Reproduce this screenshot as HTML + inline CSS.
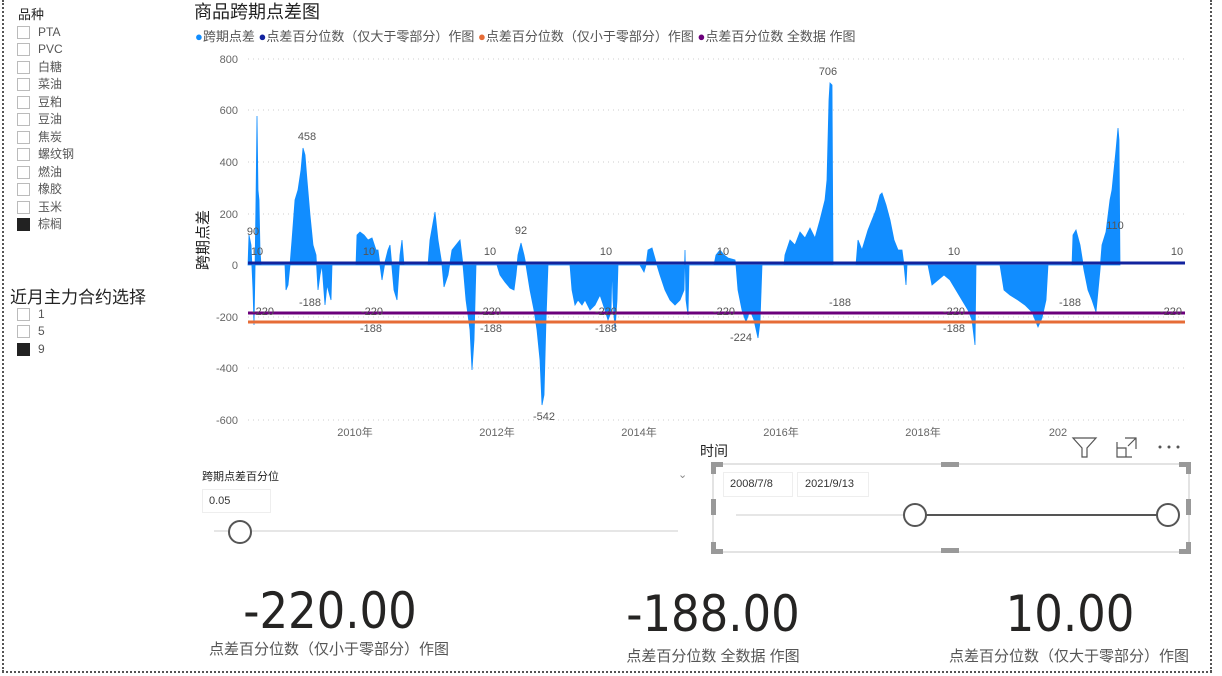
<!DOCTYPE html>
<html><head><meta charset="utf-8"><style>
body{margin:0;width:1222px;height:676px;background:#fff;position:relative;overflow:hidden;font-family:"Liberation Sans","Noto Sans CJK SC",sans-serif;color:#333}
.a{position:absolute;white-space:nowrap}
.cb{position:absolute;left:17px;width:11px;height:11px;border:1px solid #bbb;background:#fff}
.cb.on{background:#222;border-color:#222}
.it{position:absolute;left:38px;font-size:12px;line-height:14px;color:#555}
.big{position:absolute;font-family:"DejaVu Sans Condensed","Liberation Sans Narrow",sans-serif;font-size:50px;color:#252423;text-align:center}
.lab{position:absolute;font-size:15px;color:#555;text-align:center}
</style></head><body>
<div class="a" style="left:2px;top:0;width:0;height:672px;border-left:2px dotted #555"></div>
<div class="a" style="left:1210px;top:0;width:0;height:672px;border-left:2px dotted #555"></div>
<div class="a" style="left:2px;top:671px;width:1210px;height:0;border-top:2px dotted #555"></div>

<div class="a" style="left:18px;top:4px;font-size:13px;color:#222">品种</div>
<div class="cb" style="top:26px"></div><div class="it" style="top:25px">PTA</div>
<div class="cb" style="top:43px"></div><div class="it" style="top:42px">PVC</div>
<div class="cb" style="top:61px"></div><div class="it" style="top:60px">白糖</div>
<div class="cb" style="top:78px"></div><div class="it" style="top:77px">菜油</div>
<div class="cb" style="top:96px"></div><div class="it" style="top:95px">豆粕</div>
<div class="cb" style="top:113px"></div><div class="it" style="top:112px">豆油</div>
<div class="cb" style="top:131px"></div><div class="it" style="top:130px">焦炭</div>
<div class="cb" style="top:148px"></div><div class="it" style="top:147px">螺纹钢</div>
<div class="cb" style="top:166px"></div><div class="it" style="top:165px">燃油</div>
<div class="cb" style="top:183px"></div><div class="it" style="top:182px">橡胶</div>
<div class="cb" style="top:201px"></div><div class="it" style="top:200px">玉米</div>
<div class="cb on" style="top:218px"></div><div class="it" style="top:217px">棕榈</div>
<div class="a" style="left:10px;top:283px;font-size:17px;color:#222">近月主力合约选择</div>
<div class="cb" style="top:308px"></div><div class="it" style="top:307px">1</div>
<div class="cb" style="top:325px"></div><div class="it" style="top:324px">5</div>
<div class="cb on" style="top:343px"></div><div class="it" style="top:342px">9</div>

<div class="a" style="left:194px;top:-2px;font-size:18px;color:#222">商品跨期点差图</div>
<div class="a" style="left:195px;top:26px;font-size:13px;color:#555">
<span style="color:#118dff">●</span>跨期点差 <span style="color:#12239e">●</span>点差百分位数（仅大于零部分）作图 <span style="color:#e66c37">●</span>点差百分位数（仅小于零部分）作图 <span style="color:#6b007b">●</span>点差百分位数 全数据 作图</div>
<div class="a" style="left:192px;top:270px;font-size:15px;color:#222;transform:rotate(-90deg);transform-origin:0 0">跨期点差</div>

<svg class="a" style="left:0;top:0" width="1222" height="440">
<g stroke="#ccc" stroke-dasharray="1,4" stroke-width="1">
<line x1="248" y1="59" x2="1185" y2="59"/><line x1="248" y1="110" x2="1185" y2="110"/><line x1="248" y1="162" x2="1185" y2="162"/><line x1="248" y1="214" x2="1185" y2="214"/><line x1="248" y1="317" x2="1185" y2="317"/><line x1="248" y1="368" x2="1185" y2="368"/><line x1="248" y1="420" x2="1185" y2="420"/></g>
<g font-family="Liberation Sans,sans-serif" font-size="11" fill="#666" text-anchor="end">
<text x="238" y="63">800</text><text x="238" y="114">600</text><text x="238" y="166">400</text><text x="238" y="218">200</text><text x="238" y="269">0</text><text x="238" y="321">-200</text><text x="238" y="372">-400</text><text x="238" y="424">-600</text></g>
<g font-family="Liberation Sans,Noto Sans CJK SC,sans-serif" font-size="11" fill="#666" text-anchor="middle">
<text x="355" y="436">2010年</text><text x="497" y="436">2012年</text><text x="639" y="436">2014年</text><text x="781" y="436">2016年</text><text x="923" y="436">2018年</text><text x="1058" y="436">202</text></g>
<path fill="#118dff" stroke="#118dff" stroke-width="0.8" d="M248 265 L249 235 251 245 253 290 254 325 255 270 256 200 257 116 258 190 259 200 260 250 261 265 285 265 286 290 288 285 290 265 292 240 295 200 298 190 301 170 303 148 305 155 307 180 310 215 313 245 316 255 318 290 320 275 322 265 325 305 327 285 331 300 332 265 356 265 357 235 360 232 364 235 368 240 372 238 376 250 378 250 380 265 382 280 385 262 388 250 390 245 394 290 397 300 400 255 402 240 404 265 428 265 430 240 435 212 438 240 442 265 444 287 448 275 452 250 456 245 460 240 463 265 466 300 470 330 472 370 474 340 476 265 497 265 500 275 505 282 510 288 514 290 516 275 518 255 521 243 524 255 526 265 530 290 534 310 537 330 540 360 542 405 544 395 546 320 548 265 570 265 572 290 575 305 578 300 582 305 585 300 590 310 595 305 600 295 605 310 608 320 611 312 612 265 613 300 615 330 617 300 618 265 640 265 644 272 646 265 648 250 652 248 656 262 660 275 665 290 670 300 675 305 680 300 684 290 685 250 686 300 688 315 689 265 714 265 716 255 720 250 724 255 728 258 735 260 736 265 738 290 742 310 746 322 750 310 754 320 758 338 760 322 762 265 784 265 785 255 790 240 795 245 800 232 805 238 810 228 815 238 820 220 825 200 827 180 829 100 830 83 832 85 833 265 856 265 858 240 862 250 868 230 872 220 876 210 880 195 882 193 886 205 890 220 894 240 898 250 902 250 904 265 906 285 907 265 928 265 932 285 938 280 944 275 950 280 956 290 962 300 968 310 972 320 975 345 976 265 1000 265 1004 290 1010 295 1018 300 1025 305 1032 312 1038 327 1042 318 1046 300 1048 265 1072 265 1073 235 1076 230 1080 245 1084 270 1088 290 1092 300 1096 312 1100 270 1102 245 1106 232 1110 200 1112 190 1114 170 1116 150 1118 128 1119 140 1120 265 Z"/>
<line x1="248" y1="263" x2="1185" y2="263" stroke="#12239e" stroke-width="3"/>
<line x1="248" y1="313" x2="1185" y2="313" stroke="#6b007b" stroke-width="3"/>
<line x1="248" y1="322" x2="1185" y2="322" stroke="#e66c37" stroke-width="3"/>
<g font-family="Liberation Sans,sans-serif" font-size="11" fill="#555" text-anchor="middle">
<text x="253" y="235">90</text><text x="257" y="255">10</text><text x="307" y="140">458</text><text x="310" y="306">-188</text><text x="263" y="315">-220</text>
<text x="369" y="255">10</text><text x="372" y="315">-220</text><text x="371" y="332">-188</text>
<text x="490" y="255">10</text><text x="521" y="234">92</text><text x="490" y="315">-220</text><text x="491" y="332">-188</text>
<text x="606" y="255">10</text><text x="606" y="315">-220</text><text x="606" y="332">-188</text><text x="544" y="420">-542</text>
<text x="723" y="255">10</text><text x="724" y="315">-220</text><text x="741" y="341">-224</text>
<text x="828" y="75">706</text><text x="840" y="306">-188</text>
<text x="954" y="255">10</text><text x="954" y="315">-220</text><text x="954" y="332">-188</text>
<text x="1070" y="306">-188</text><text x="1115" y="229">110</text><text x="1177" y="255">10</text><text x="1171" y="315">-220</text></g>
</svg>

<div class="a" style="left:202px;top:468px;font-size:11px;color:#222">跨期点差百分位</div>
<div class="a" style="left:678px;top:468px;font-size:11px;color:#888">⌄</div>
<div class="a" style="left:202px;top:489px;width:67px;height:22px;border:1px solid #eee;font-size:11px;line-height:22px;text-indent:6px">0.05</div>
<div class="a" style="left:214px;top:530px;width:464px;height:2px;background:#e6e6e6"></div>
<div class="a" style="left:228px;top:520px;width:20px;height:20px;border:2px solid #555;border-radius:50%;background:#fff"></div>

<div class="a" style="left:700px;top:441px;font-size:14px;color:#222">时间</div>
<svg class="a" style="left:1070px;top:434px" width="120" height="26">
<path d="M3 4 H26 L17 14 V23 H12 V14 Z" fill="none" stroke="#555" stroke-width="1.2"/>
<path d="M47 8 V23 H62 M47 14 H56 V23 M55 4 H66 V15 M66 4 L58 12" fill="none" stroke="#555" stroke-width="1.2"/>
<circle cx="90" cy="13" r="1.5" fill="#555"/><circle cx="99" cy="13" r="1.5" fill="#555"/><circle cx="108" cy="13" r="1.5" fill="#555"/>
</svg>
<div class="a" style="left:712px;top:463px;width:474px;height:86px;border:2px solid #e3e3e3"></div>
<svg class="a" style="left:708px;top:459px" width="486" height="98" fill="#999">
<path d="M3 3 H15 V8 H8 V15 H3 Z"/><path d="M483 3 H471 V8 H478 V15 H483 Z"/><path d="M3 95 H15 V90 H8 V83 H3 Z"/><path d="M483 95 H471 V90 H478 V83 H483 Z"/>
<rect x="233" y="3" width="18" height="5"/><rect x="233" y="89" width="18" height="5"/><rect x="3" y="40" width="5" height="16"/><rect x="478" y="40" width="5" height="16"/>
</svg>
<div class="a" style="left:723px;top:472px;width:68px;height:23px;border:1px solid #eee;font-size:11px;line-height:23px;text-indent:6px">2008/7/8</div>
<div class="a" style="left:797px;top:472px;width:70px;height:23px;border:1px solid #eee;font-size:11px;line-height:23px;text-indent:7px">2021/9/13</div>
<div class="a" style="left:736px;top:514px;width:180px;height:2px;background:#e6e6e6"></div>
<div class="a" style="left:916px;top:514px;width:252px;height:2px;background:#555"></div>
<div class="a" style="left:903px;top:503px;width:20px;height:20px;border:2px solid #555;border-radius:50%;background:#fff"></div>
<div class="a" style="left:1156px;top:503px;width:20px;height:20px;border:2px solid #555;border-radius:50%;background:#fff"></div>

<div class="big" style="left:200px;top:582px;width:260px">-220.00</div>
<div class="lab" style="left:190px;top:638px;width:278px">点差百分位数（仅小于零部分）作图</div>
<div class="big" style="left:590px;top:585px;width:246px">-188.00</div>
<div class="lab" style="left:590px;top:645px;width:246px">点差百分位数 全数据 作图</div>
<div class="big" style="left:960px;top:585px;width:220px">10.00</div>
<div class="lab" style="left:930px;top:645px;width:278px">点差百分位数（仅大于零部分）作图</div>
</body></html>
